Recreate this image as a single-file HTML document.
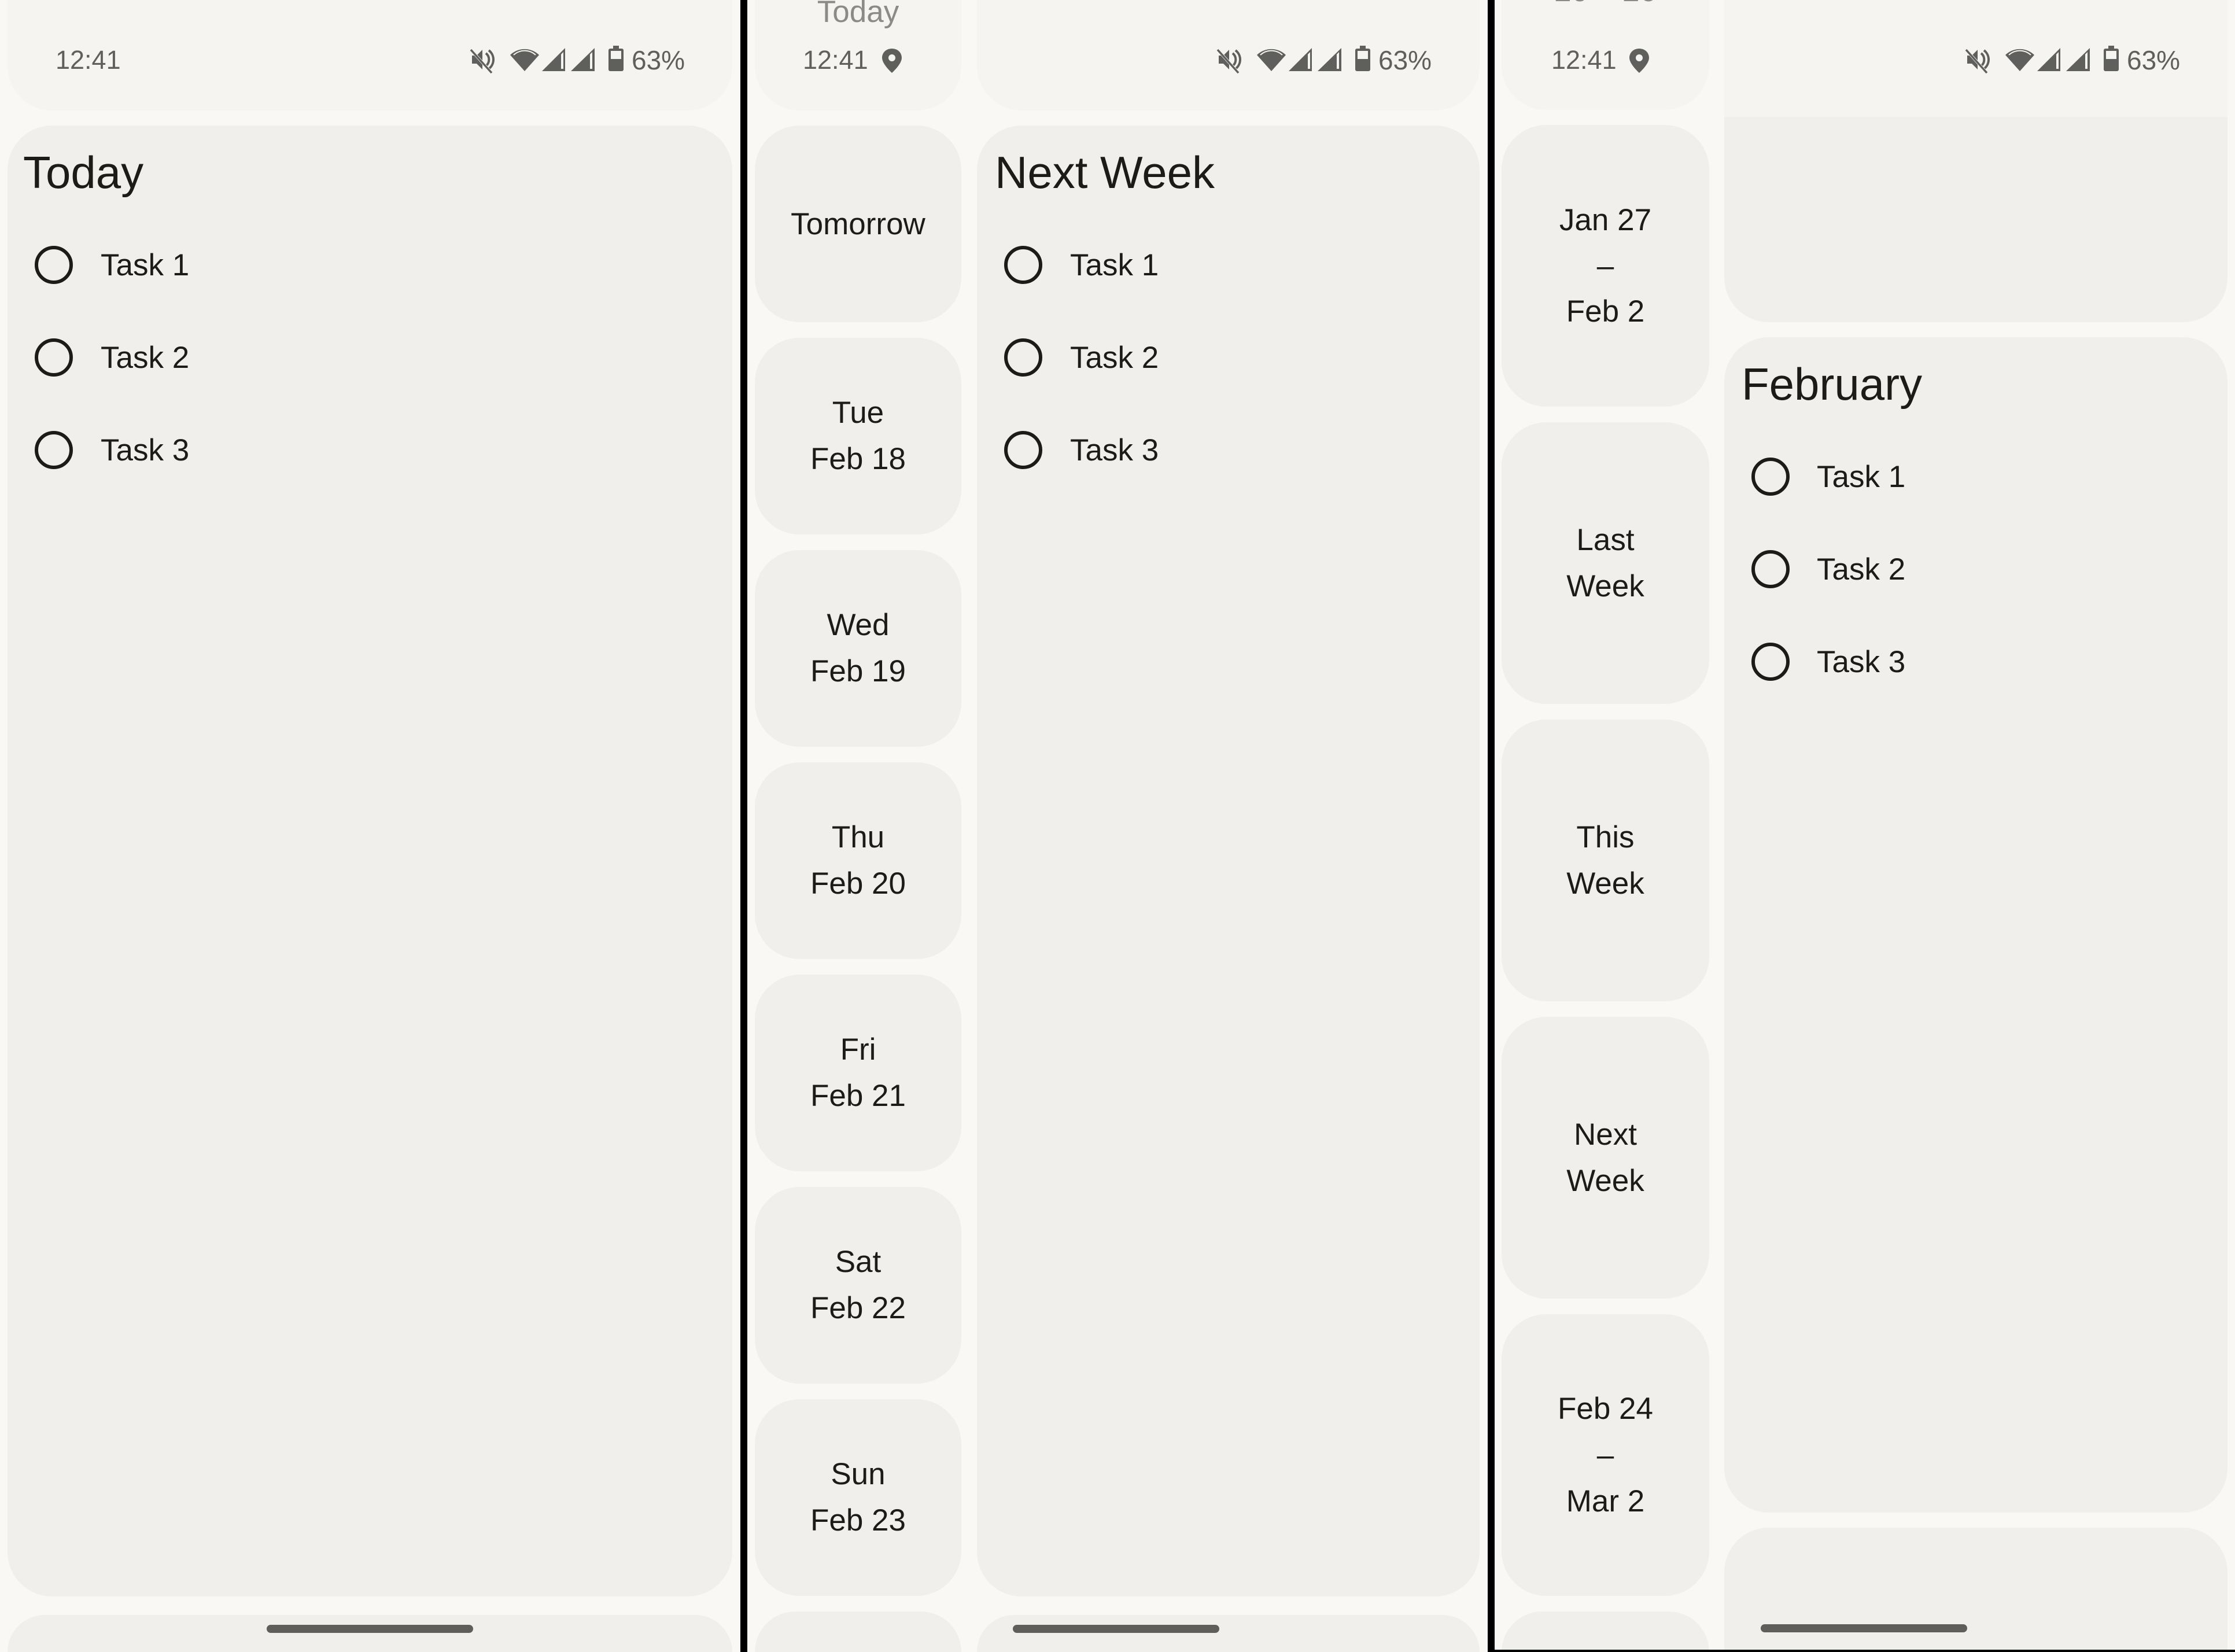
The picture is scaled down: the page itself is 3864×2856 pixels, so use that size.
<!DOCTYPE html>
<html><head><meta charset="utf-8"><style>
*{margin:0;padding:0;box-sizing:border-box}
html{width:3864px;height:2856px;overflow:hidden}
body{width:3864px;height:2856px;background:#f9f8f5;position:relative;overflow:hidden;font-family:"Liberation Sans",Arial,sans-serif;color:#1c1b1a}
.a{position:absolute}
.st{background:#f5f4f0}
.cd{background:#f0efeb;border-radius:77px}
.bt{border-bottom-left-radius:0;border-bottom-right-radius:0}
.div{position:absolute;top:0;height:2856px;background:#000}
.clk{position:absolute;font-size:45px;line-height:45px;color:#5f5f5e;top:81px}
.ttl{position:absolute;font-size:78px;line-height:78px;top:259px}
.tk{position:absolute;font-size:53px;line-height:53px}
.ci{position:absolute;width:66px;height:66px;border:6px solid #1c1b1a;border-radius:50%}
.sc{position:absolute;display:flex;flex-direction:column;align-items:center;justify-content:center;font-size:53px;text-align:center}
.bar{position:absolute;height:14px;background:#5f5e5c;border-radius:7px;top:2809px}
</style></head><body>

<!-- Panel 1 -->
<div class="a st" style="left:13px;top:-100px;width:1253px;height:291px;border-radius:77px"></div>
<div class="clk" style="left:96px">12:41</div>
<svg class="a" style="left:812px;top:78px" width="374" height="50" viewBox="0 0 374 50">
<g fill="#5f5f5e" stroke="#5f5f5e">
<path d="M4 18h8l10-10v34l-10-10H4z" stroke="none"/>
<path d="M28 14a14 14 0 0 1 0 22M33 9a20 20 0 0 1 0 32" fill="none" stroke-width="4"/>
<path d="M3 9l36 40" stroke-width="5" stroke="#f5f4f0"/><path d="M2 8l36 40" stroke-width="3.5"/>
<path d="M95 45L70 17a36 36 0 0 1 50 0z" stroke="none"/>
<path d="M76 17a28 28 0 0 1 38 0" fill="none" stroke="#f5f4f0" stroke-width="2"/>
<path d="M125 45L165 5v40z" stroke="none"/><path d="M158 16v25h4V12z" fill="#f5f4f0" stroke="none"/>
<path d="M175 45L216 5v40z" stroke="none"/><path d="M208 16v25h4V12z" fill="#f5f4f0" stroke="none"/>
<rect x="240" y="6" width="26" height="39" rx="3" stroke="none"/><rect x="248" y="1" width="10" height="6" stroke="none"/>
<rect x="244" y="10" width="18" height="14" fill="#f5f4f0" stroke="none"/>
</g>
<text x="280" y="42" font-family="Liberation Sans" font-size="46" fill="#5f5f5e">63%</text>
</svg>
<div class="a cd" style="left:13px;top:217px;width:1253px;height:2543px"></div>
<div class="a cd bt" style="left:13px;top:2792px;width:1253px;height:64px"></div>
<div class="ttl" style="left:40px">Today</div>
<div class="ci" style="left:60px;top:425px"></div><div class="tk" style="left:174px;top:432px">Task 1</div>
<div class="ci" style="left:60px;top:585px"></div><div class="tk" style="left:174px;top:592px">Task 2</div>
<div class="ci" style="left:60px;top:745px"></div><div class="tk" style="left:174px;top:752px">Task 3</div>
<div class="bar" style="left:461px;width:357px"></div>

<div class="div" style="left:1280px;width:12px"></div>

<!-- Panel 2 -->
<div class="a st" style="left:1305px;top:-100px;width:357px;height:291px;border-radius:77px"></div>
<div class="a" style="left:1305px;width:357px;top:-6px;text-align:center;font-size:53px;line-height:53px;color:#8b8a88">Today</div>
<div class="clk" style="left:1388px">12:41</div>
<svg class="a" style="left:1524px;top:84px" width="36" height="42" viewBox="0 0 36 42"><path d="M18 0C8 0 1 7 1 16c0 11 17 26 17 26s17-15 17-26C35 7 28 0 18 0zm0 22a6 6 0 1 1 0-12 6 6 0 0 1 0 12z" fill="#5f5f5e"/></svg>
<div class="a st" style="left:1689px;top:-100px;width:869px;height:291px;border-radius:77px"></div>
<svg class="a" style="left:2103px;top:78px" width="374" height="50" viewBox="0 0 374 50">
<g fill="#5f5f5e" stroke="#5f5f5e">
<path d="M4 18h8l10-10v34l-10-10H4z" stroke="none"/>
<path d="M28 14a14 14 0 0 1 0 22M33 9a20 20 0 0 1 0 32" fill="none" stroke-width="4"/>
<path d="M3 9l36 40" stroke-width="5" stroke="#f5f4f0"/><path d="M2 8l36 40" stroke-width="3.5"/>
<path d="M95 45L70 17a36 36 0 0 1 50 0z" stroke="none"/>
<path d="M76 17a28 28 0 0 1 38 0" fill="none" stroke="#f5f4f0" stroke-width="2"/>
<path d="M125 45L165 5v40z" stroke="none"/><path d="M158 16v25h4V12z" fill="#f5f4f0" stroke="none"/>
<path d="M175 45L216 5v40z" stroke="none"/><path d="M208 16v25h4V12z" fill="#f5f4f0" stroke="none"/>
<rect x="240" y="6" width="26" height="39" rx="3" stroke="none"/><rect x="248" y="1" width="10" height="6" stroke="none"/>
<rect x="244" y="10" width="18" height="14" fill="#f5f4f0" stroke="none"/>
</g>
<text x="280" y="42" font-family="Liberation Sans" font-size="46" fill="#5f5f5e">63%</text>
</svg>
<div class="sc cd" style="left:1305px;top:217px;width:357px;height:340px">Tomorrow</div>
<div class="sc cd" style="left:1305px;top:584px;width:357px;height:340px;line-height:80px">Tue<br>Feb 18</div>
<div class="sc cd" style="left:1305px;top:951px;width:357px;height:340px;line-height:80px">Wed<br>Feb 19</div>
<div class="sc cd" style="left:1305px;top:1318px;width:357px;height:340px;line-height:80px">Thu<br>Feb 20</div>
<div class="sc cd" style="left:1305px;top:1685px;width:357px;height:340px;line-height:80px">Fri<br>Feb 21</div>
<div class="sc cd" style="left:1305px;top:2052px;width:357px;height:340px;line-height:80px">Sat<br>Feb 22</div>
<div class="sc cd" style="left:1305px;top:2419px;width:357px;height:340px;line-height:80px">Sun<br>Feb 23</div>
<div class="a cd bt" style="left:1305px;top:2786px;width:357px;height:70px"></div>
<div class="a cd" style="left:1689px;top:217px;width:869px;height:2543px"></div>
<div class="a cd bt" style="left:1689px;top:2792px;width:869px;height:64px"></div>
<div class="ttl" style="left:1720px">Next Week</div>
<div class="ci" style="left:1736px;top:425px"></div><div class="tk" style="left:1850px;top:432px">Task 1</div>
<div class="ci" style="left:1736px;top:585px"></div><div class="tk" style="left:1850px;top:592px">Task 2</div>
<div class="ci" style="left:1736px;top:745px"></div><div class="tk" style="left:1850px;top:752px">Task 3</div>
<div class="bar" style="left:1751px;width:357px"></div>

<div class="div" style="left:2572px;width:12px"></div>

<!-- Panel 3 -->
<div class="a st" style="left:2596px;top:-100px;width:359px;height:290px;border-radius:77px"></div>
<div class="a" style="left:2596px;width:359px;top:-42px;text-align:center;font-size:53px;line-height:53px;color:#8b8a88">20 – 26</div>
<div class="clk" style="left:2682px">12:41</div>
<svg class="a" style="left:2816px;top:84px" width="36" height="42" viewBox="0 0 36 42"><path d="M18 0C8 0 1 7 1 16c0 11 17 26 17 26s17-15 17-26C35 7 28 0 18 0zm0 22a6 6 0 1 1 0-12 6 6 0 0 1 0 12z" fill="#5f5f5e"/></svg>
<div class="sc cd" style="left:2596px;top:216px;width:359px;height:487px;line-height:79px">Jan 27<br>–<br>Feb 2</div>
<div class="sc cd" style="left:2596px;top:730px;width:359px;height:487px;line-height:80px">Last<br>Week</div>
<div class="sc cd" style="left:2596px;top:1244px;width:359px;height:487px;line-height:80px">This<br>Week</div>
<div class="sc cd" style="left:2596px;top:1758px;width:359px;height:487px;line-height:80px">Next<br>Week</div>
<div class="sc cd" style="left:2596px;top:2272px;width:359px;height:487px;line-height:80px">Feb 24<br>–<br>Mar 2</div>
<div class="a cd bt" style="left:2596px;top:2786px;width:359px;height:70px"></div>
<div class="a cd" style="left:2981px;top:-200px;width:870px;height:757px"></div>
<div class="a st" style="left:2981px;top:0;width:870px;height:202px"></div>
<svg class="a" style="left:3397px;top:78px" width="374" height="50" viewBox="0 0 374 50">
<g fill="#5f5f5e" stroke="#5f5f5e">
<path d="M4 18h8l10-10v34l-10-10H4z" stroke="none"/>
<path d="M28 14a14 14 0 0 1 0 22M33 9a20 20 0 0 1 0 32" fill="none" stroke-width="4"/>
<path d="M3 9l36 40" stroke-width="5" stroke="#f5f4f0"/><path d="M2 8l36 40" stroke-width="3.5"/>
<path d="M95 45L70 17a36 36 0 0 1 50 0z" stroke="none"/>
<path d="M76 17a28 28 0 0 1 38 0" fill="none" stroke="#f5f4f0" stroke-width="2"/>
<path d="M125 45L165 5v40z" stroke="none"/><path d="M158 16v25h4V12z" fill="#f5f4f0" stroke="none"/>
<path d="M175 45L216 5v40z" stroke="none"/><path d="M208 16v25h4V12z" fill="#f5f4f0" stroke="none"/>
<rect x="240" y="6" width="26" height="39" rx="3" stroke="none"/><rect x="248" y="1" width="10" height="6" stroke="none"/>
<rect x="244" y="10" width="18" height="14" fill="#f5f4f0" stroke="none"/>
</g>
<text x="280" y="42" font-family="Liberation Sans" font-size="46" fill="#5f5f5e">63%</text>
</svg>
<div class="a cd" style="left:2981px;top:583px;width:870px;height:2032px"></div>
<div class="a cd bt" style="left:2981px;top:2641px;width:870px;height:215px"></div>
<div class="ttl" style="left:3011px;top:625px">February</div>
<div class="ci" style="left:3028px;top:791px"></div><div class="tk" style="left:3141px;top:798px">Task 1</div>
<div class="ci" style="left:3028px;top:951px"></div><div class="tk" style="left:3141px;top:958px">Task 2</div>
<div class="ci" style="left:3028px;top:1111px"></div><div class="tk" style="left:3141px;top:1118px">Task 3</div>
<div class="bar" style="left:3044px;width:357px;top:2808px"></div>
<div class="a" style="left:2572px;top:2852px;width:1292px;height:4px;background:#000"></div>
</body></html>
